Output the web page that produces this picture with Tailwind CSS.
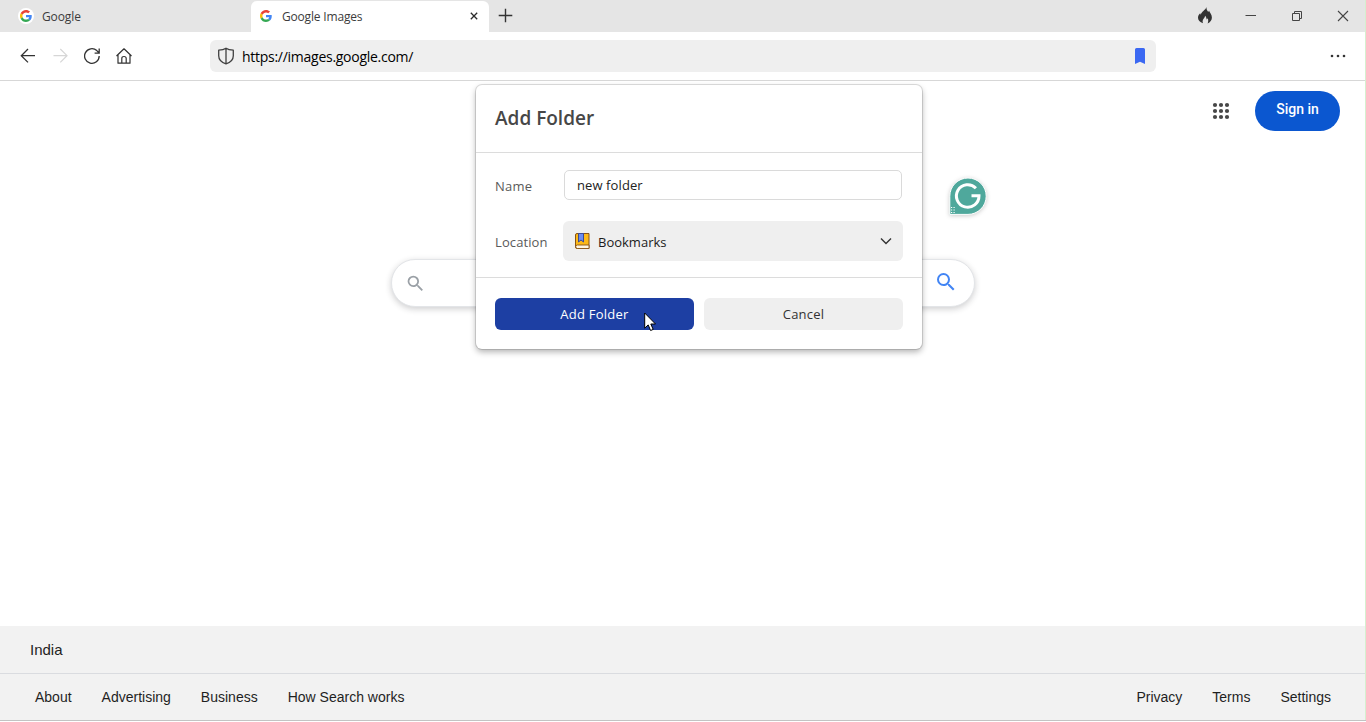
<!DOCTYPE html>
<html lang="en">
<head>
<meta charset="utf-8">
<title>Google Images</title>
<script src="https://cdn.jsdelivr.net/npm/@tailwindcss/browser@4"></script>
</head>
<body class="relative flex h-[722px] w-[1366px] flex-col overflow-hidden bg-white font-['Open_Sans',sans-serif] text-[#202124]">
<svg class="hidden">
  <symbol id="g" viewBox="0 0 48 48">
    <path fill="#ea4335" d="M24 9.5c3.54 0 6.71 1.22 9.21 3.6l6.85-6.85C35.9 2.38 30.47 0 24 0 14.62 0 6.51 5.38 2.56 13.22l7.98 6.19C12.43 13.72 17.74 9.5 24 9.5z"/>
    <path fill="#4285f4" d="M46.98 24.55c0-1.57-.15-3.09-.38-4.55H24v9.02h12.94c-.58 2.96-2.26 5.48-4.78 7.18l7.73 6c4.51-4.18 7.09-10.36 7.09-17.65z"/>
    <path fill="#fbbc05" d="M10.53 28.59c-.48-1.45-.76-2.99-.76-4.59s.27-3.14.76-4.59l-7.98-6.19C.92 16.46 0 20.12 0 24s.92 7.54 2.56 10.78l7.97-6.19z"/>
    <path fill="#34a853" d="M24 48c6.48 0 11.93-2.13 15.89-5.81l-7.73-6c-2.15 1.45-4.92 2.3-8.16 2.3-6.26 0-11.57-4.22-13.47-9.91l-7.98 6.19C6.51 42.62 14.62 48 24 48z"/>
  </symbol>
  <symbol id="search" viewBox="0 0 24 24">
    <path d="M15.5 14h-.79l-.28-.27A6.47 6.47 0 0 0 16 9.5 6.5 6.5 0 1 0 9.5 16c1.61 0 3.09-.59 4.23-1.57l.27.28v.79l5 4.99L20.49 19l-4.99-5zm-6 0C7.01 14 5 11.99 5 9.5S7.01 5 9.5 5 14 7.01 14 9.5 11.99 14 9.5 14z"/>
  </symbol>
</svg>

<!-- Tab strip -->
<header class="flex h-8 shrink-0 bg-[#e5e5e5] text-xs text-[#3c3c3c]">
  <div class="flex h-8 w-[251px] items-center gap-2 pl-[18px]">
    <span class="flex size-4 items-center justify-center rounded-full bg-white"><svg class="size-3"><use href="#g"/></svg></span>
    <span class="pt-0.5 tracking-[-0.1px]">Google</span>
  </div>
  <div class="mt-px flex h-[31px] w-[238px] items-center rounded-t-md bg-white pl-[9px] pr-2">
    <svg class="mb-px size-3"><use href="#g"/></svg>
    <span class="ml-[10px] flex-1 pt-px tracking-[-0.18px]">Google Images</span>
    <svg class="mb-px mr-[3px] size-2" viewBox="0 0 8 8" stroke="#2b2b2b" stroke-width="1.3"><path d="M.8.8 7.2 7.2M7.2.8.8 7.2"/></svg>
  </div>
  <div class="flex flex-1 items-center pb-px pl-[9px]">
    <svg class="size-[15px]" viewBox="0 0 15 15" stroke="#333" stroke-width="1.4"><path d="M7.5.7v13.6M.7 7.5h13.6"/></svg>
  </div>
  <div class="flex items-center pr-[17px]">
    <svg class="mb-px h-[17px] w-[14px]" viewBox="0 0 14 17" fill="#333"><path d="M8.500 0c-.2 2 .6 3.400 1.700 4.900.4-.5.600-.9.800-1.400.5 2.200 2.900 3.800 2.900 6.900 0 2.900-1.700 4.700-4.300 6 .8-1.800.8-3.400.1-5.200-.3.700-.6 1.100-1.100 1.400-.1-1.600-.5-2.800-1.500-3.900-.1 2.200-2.500 3.400-2.500 5.500 0 .8.100 1.400.5 2.100C1.800 15.100 0 13.300 0 10.700c0-1.800.8-3.100 2.200-4.500.1.600.3 1 .7 1.500C3.300 4.600 7.300 3.400 8.500 0Z"/></svg>
    <svg class="ml-[33px] h-3 w-3" viewBox="0 0 12 12" stroke="#444"><path d="M.5 5.500h10.500"/></svg>
    <svg class="ml-[34px] h-3 w-3" viewBox="0 0 12 12" fill="none" stroke="#444"><path d="M1.500 3.500h7v7h-7zM3.500 3.500v-2h7v7h-2"/></svg>
    <svg class="ml-[34px] h-3 w-3" viewBox="0 0 12 12" fill="none" stroke="#444" stroke-width="1.100"><path d="m1 1 10 10M11 1 1 11"/></svg>
  </div>
</header>

<!-- Toolbar -->
<nav class="flex h-[49px] shrink-0 items-center border-b border-[#d7d7d7] bg-white pl-5 pr-[19px]">
  <svg class="size-4" viewBox="0 0 16 16" fill="none" stroke="#333" stroke-width="1.300"><path d="M15 7.700H1.500M8 1 1.300 7.700 8 14.400"/></svg>
  <svg class="ml-4 size-4" viewBox="0 0 16 16" fill="none" stroke="#d6d6d6" stroke-width="1.200"><path d="M1.500 7.700h13.300M8.300 1 15 7.700l-6.700 6.700"/></svg>
  <svg class="ml-4 size-4" viewBox="0 0 16 16" fill="none" stroke="#333" stroke-width="1.300"><path d="M15.200 8a7.300 7.300 0 1 1-2.400-5.400L15 4.900M15.200.6v4.500h-4.600"/></svg>
  <svg class="ml-4 size-4" viewBox="0 0 16 16" fill="none" stroke="#333" stroke-width="1.200" stroke-linejoin="round"><path d="M.5 8 8 .8 15.500 8M2 6.700v8.500h12V6.700M5.800 15V10.500q0-2 2.200-2t2.200 2V15"/></svg>
  <div class="ml-[78px] flex h-8 w-[946px] items-center rounded-md bg-[#efefef] pl-2 pr-[10px]">
    <svg class="h-[18px] w-4" viewBox="0 0 16 18" fill="none" stroke="#404040" stroke-width="1.300" stroke-linejoin="round"><path d="M8 1.200Q5.500 3.100.7 3.200v5.600c0 4 3 6.700 7.300 8 4.300-1.300 7.300-4 7.300-8V3.200Q10.500 3.100 8 1.200Zm0 0v15.600"/></svg>
    <span class="ml-2 flex-1 pt-0.5 text-sm tracking-[-0.27px] text-black">https://images.google.com/</span>
    <svg class="mr-px h-4 w-[10px]" viewBox="0 0 10 16" fill="#3b68f2"><path d="M1.500 0h7Q10 0 10 1.500V16L5 13.700 0 16V1.500Q0 0 1.500 0Z"/></svg>
  </div>
  <svg class="ml-auto h-4 w-[18px]" viewBox="0 0 18 16" fill="#333"><circle cx="3" cy="8" r="1.300"/><circle cx="9" cy="8" r="1.300"/><circle cx="15" cy="8" r="1.300"/></svg>
</nav>

<!-- Page -->
<main class="flex flex-1 flex-col">
  <div class="flex items-center justify-end pr-[26px] pt-[10px]">
    <svg class="mr-[25px] size-[18px]" viewBox="0 0 18 18" fill="#474747"><circle cx="3" cy="3" r="2.100"/><circle cx="9" cy="3" r="2.100"/><circle cx="15" cy="3" r="2.100"/><circle cx="3" cy="9" r="2.100"/><circle cx="9" cy="9" r="2.100"/><circle cx="15" cy="9" r="2.100"/><circle cx="3" cy="15" r="2.100"/><circle cx="9" cy="15" r="2.100"/><circle cx="15" cy="15" r="2.100"/></svg>
    <button class="h-10 w-[85px] rounded-full bg-[#0b57d0] pb-1 font-[Roboto,sans-serif] text-sm font-medium text-white">Sign in</button>
  </div>
  <div class="ml-[391px] mt-[128px] flex h-12 w-[584px] items-center justify-between rounded-full border border-[#e3e5e8] bg-white pl-[13px] pr-4 shadow-[0_2px_6px_rgba(32,33,36,0.22)]">
    <svg class="size-[21px]" fill="#9aa0a6"><use href="#search"/></svg>
    <svg class="mb-[3px] size-6" fill="#4285f4"><use href="#search"/></svg>
  </div>
</main>

<!-- Footer -->
<footer class="mb-px shrink-0 border-b border-[#c3c3c3] bg-[#f2f2f2] font-['Liberation_Sans',sans-serif] text-[#1f1f1f]">
  <div class="flex h-12 items-center border-b border-[#dadce0] px-[30px] pt-0.5 text-[15px]"><span>India</span></div>
  <div class="flex h-[46px] items-center justify-between pl-[35px] pr-[35px] text-sm">
    <div class="flex gap-[30px]"><span>About</span><span>Advertising</span><span>Business</span><span>How Search works</span></div>
    <div class="flex gap-[30px]"><span>Privacy</span><span>Terms</span><span>Settings</span></div>
  </div>
</footer>

<!-- Writing assistant badge -->
<svg class="absolute left-[946px] top-[175px] h-11 w-11 drop-shadow-[0_1px_2px_rgba(0,0,0,0.2)]" viewBox="0 0 44 44" fill="none">
  <path d="M22 3a18.200 18.200 0 0 1 0 36.400H3.800V21.200A18.200 18.200 0 0 1 22 3Z" fill="#4fa89c" stroke="#fff" stroke-width="1"/>
  <path d="M29.900 13.200A11.300 11.300 0 1 0 33 20.800H25.500" stroke="#fff" stroke-width="3"/>
  <path d="M5 32.500h1.200M7.500 32.500h1.200M5 35h1.200M7.500 35h1.200M5 37.500h1.200M7.500 37.500h1.200" stroke="#fff" stroke-width="1.200"/>
</svg>

<!-- Add folder dialog -->
<section class="absolute left-[476px] top-[85px] flex h-[264px] w-[446px] flex-col rounded-md bg-white text-[13px] shadow-[0_0_0_1px_rgba(0,0,0,0.12),0_3px_6px_rgba(0,0,0,0.3)]">
  <h2 class="flex h-[68px] items-center border-b border-[#dcdcdc] px-[19px] text-[19px] font-semibold text-[#474747]"><span>Add Folder</span></h2>
  <div class="flex h-[125px] flex-col border-b border-[#dcdcdc] px-[19px] pt-[17px]">
    <label class="flex items-center">
      <span class="w-[69px] pt-[3px] tracking-[0.2px] text-[#5a5a5a]">Name</span>
      <span class="mr-px flex h-[30px] flex-1 items-center rounded-[5px] border border-[#dadada] pl-3 pt-0.5 tracking-[0.1px] text-[#222]">new folder</span>
    </label>
    <div class="mt-[21px] flex items-center">
      <span class="w-[68px] pt-[3px] tracking-[0.1px] text-[#5a5a5a]">Location</span>
      <div class="flex h-10 flex-1 items-center rounded-md bg-[#efefef] pl-3 pr-[11px] text-[#1b1b1b]">
        <svg class="h-4 w-[15px]" viewBox="0 0 15 16"><path d="M2 .5h12v15H2Q.5 15.500.5 14V2Q.5.500 2 .5Z" fill="#fcb918" stroke="#8a5414"/><path d="M2.300 12H14v3.500H2.300Q.7 15.200.7 13.700T2.300 12Z" fill="#fff6df" stroke="#8a5414" stroke-width=".9"/><path d="M3.500.5h5V9L6 7 3.500 9Z" fill="#6c8cf0" stroke="#3c4b94"/></svg>
        <span class="ml-2 flex-1 pt-[3px]">Bookmarks</span>
        <svg class="h-2 w-3" viewBox="0 0 12 8" fill="none" stroke="#333" stroke-width="1.400"><path d="m1 1.500 5 5 5-5"/></svg>
      </div>
    </div>
  </div>
  <div class="flex gap-[10px] px-[19px] pt-5">
    <button class="h-8 flex-1 rounded-md bg-[#1d3fa3] pt-0.5 tracking-[0.25px] text-white">Add Folder</button>
    <button class="h-8 flex-1 rounded-md bg-[#efefef] pt-0.5 tracking-[0.2px] text-[#333]">Cancel</button>
  </div>
</section>

<svg class="absolute left-[644px] top-[312px] h-5 w-[13px]" viewBox="0 0 13 20" fill="#fff" stroke="#000"><path d="M.7 1v15.200l3.500-3.300 2.400 5.600 2.600-1.100-2.400-5.400h4.700Z"/></svg>
<div class="absolute right-0 top-0 h-[720px] w-px bg-[#d5f0cf]"></div>
</body>
</html>
